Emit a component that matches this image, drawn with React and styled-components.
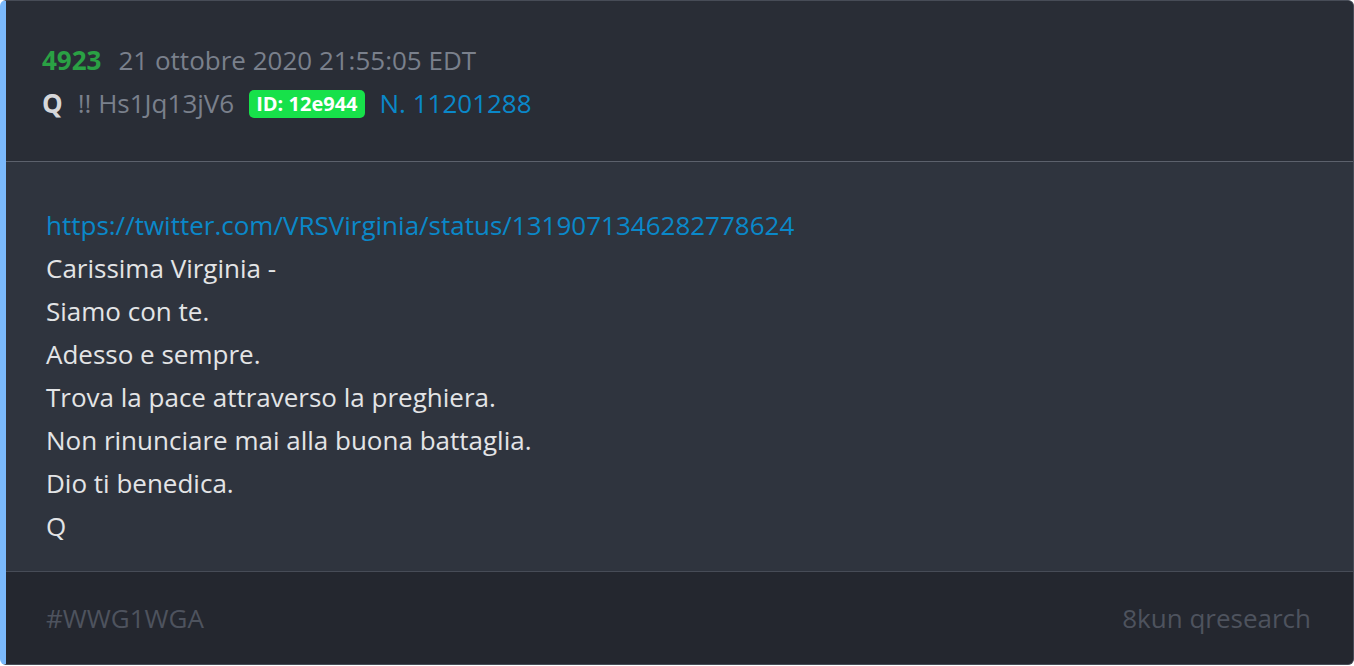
import React from "react";
import styled, { createGlobalStyle } from "styled-components";

const Global = createGlobalStyle`
  html, body { margin: 0; padding: 0; background: #ffffff; }
  body { font-family: "Open Sans", "Noto Sans", sans-serif; }
`;

const Card = styled.article`
  box-sizing: border-box;
  width: 1354px;
  height: 665px;
  display: flex;
  flex-direction: column;
  border: 1px solid #474c57;
  border-left: 6px solid #7bb9fb;
  border-radius: 6px;
  overflow: hidden;
  background: #2f343e;
`;

const Header = styled.header`
  background: #292d36;
  padding: 38px 36px 36px;
  border-bottom: 1px solid #5c616c;
  font-size: 26px;
  line-height: 43px;
  color: #7a808c;
`;

const Row = styled.div`
  display: flex;
  align-items: center;
  gap: ${(p) => p.$gap || 15}px;
  white-space: nowrap;
`;

const Num = styled.span`
  color: #2aa144;
  font-weight: 700;
`;

const Author = styled.span`
  color: #d6d7da;
  font-weight: 700;
`;

const Badge = styled.span`
  background: #17e14a;
  color: #ffffff;
  font-weight: 700;
  font-size: 20px;
  line-height: 28px;
  padding: 0 7px;
  border-radius: 5px;
`;

const Link = styled.a`
  color: #0a88c9;
  text-decoration: none;
`;

const Body = styled.div`
  flex: 1;
  padding: 42px 40px 22px;
  font-size: 26px;
  line-height: 43px;
  color: #e3e4e6;
`;

const Line = styled.div``;

const Footer = styled.footer`
  background: #24272f;
  border-top: 1px solid #474c57;
  height: 92px;
  padding: 0 42px 0 40px;
  display: flex;
  align-items: center;
  justify-content: space-between;
  font-size: 26px;
  color: #4e535e;
`;

const lines = [
  "Carissima Virginia -",
  "Siamo con te.",
  "Adesso e sempre.",
  "Trova la pace attraverso la preghiera.",
  "Non rinunciare mai alla buona battaglia.",
  "Dio ti benedica.",
  "Q",
];

export default function App() {
  return (
    <>
      <Global />
      <Card>
        <Header>
          <Row $gap={17}>
            <Num>4923</Num>
            <span>21 ottobre 2020 21:55:05 EDT</span>
          </Row>
          <Row>
            <Author>Q</Author>
            <span>!! Hs1Jq13jV6</span>
            <Badge>ID: 12e944</Badge>
            <Link href="#">N. 11201288</Link>
          </Row>
        </Header>
        <Body>
          <Line>
            <Link href="#">https://twitter.com/VRSVirginia/status/1319071346282778624</Link>
          </Line>
          {lines.map((l, i) => (
            <Line key={i}>{l}</Line>
          ))}
        </Body>
        <Footer>
          <span>#WWG1WGA</span>
          <span>8kun qresearch</span>
        </Footer>
      </Card>
    </>
  );
}
